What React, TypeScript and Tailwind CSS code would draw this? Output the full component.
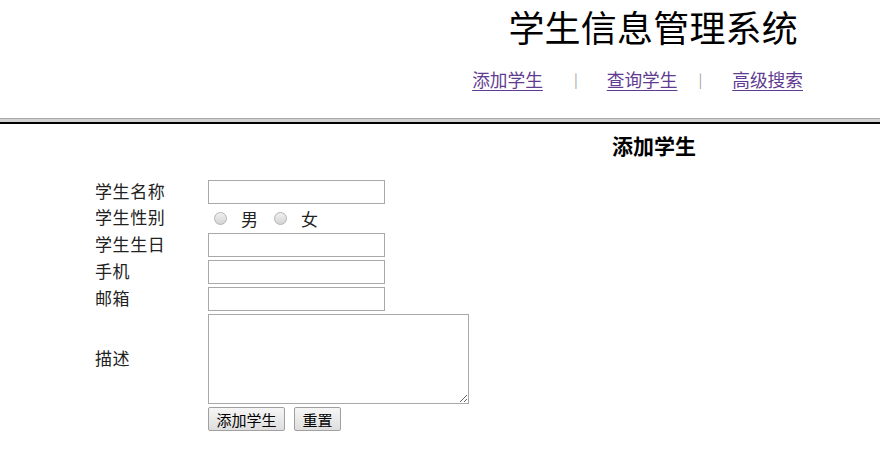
import React from "react";

const font = { fontFamily: '"Noto Sans CJK SC", "Liberation Sans", sans-serif' };

const Field = ({ label, children, h = "h-[27px]" }: { label: string; children: React.ReactNode; h?: string }) => (
    <div className={`flex items-center ${h}`}>
        <div className="w-[113px] pb-[4px] text-[17px] leading-none tracking-[0.6px] text-[#222]">{label}</div>
        {children}
    </div>
);

const TextInput = () => (
    <input type="text" className="h-[24px] w-[177px] border border-[#a9a9a9] bg-white px-1 text-[14px] outline-none" />
);

const Radio = ({ label, first }: { label: string; first?: boolean }) => (
    <label className="flex items-center">
        <span
            className={`${first ? "ml-[6px]" : "ml-[16px]"} inline-block h-[13px] w-[13px] rounded-full border border-[#b4b4b4] bg-gradient-to-b from-[#f0f0f0] to-[#d4d4d4]`}
        ></span>
        <span className="ml-[14px] text-[17px] leading-none text-[#222]">{label}</span>
    </label>
);

const App = () => {
    return (
        <div className="h-[468px] w-[880px] bg-white" style={font}>
            {/* header */}
            <div className="h-[118px]">
                <div className="flex justify-end pr-[82px] pt-[8px]">
                    <h1 className="text-[36px] leading-[36px] tracking-[0.2px] text-black">学生信息管理系统</h1>
                </div>
                <div className="mt-[23px] flex items-center justify-end pr-[77px] text-[17.7px] leading-[24px]">
                    <a href="#" className="text-[#5f3b91] underline underline-offset-[3px]">添加学生</a>
                    <span className="ml-[31px] mr-[29px] text-[14px] text-[#a0a0a0]">|</span>
                    <a href="#" className="text-[#5f3b91] underline underline-offset-[3px]">查询学生</a>
                    <span className="ml-[21px] mr-[30px] text-[14px] text-[#a0a0a0]">|</span>
                    <a href="#" className="text-[#5f3b91] underline underline-offset-[3px]">高级搜索</a>
                </div>
            </div>
            {/* divider */}
            <div className="h-[1px] bg-[#a8a8a8]"></div>
            <div className="h-[3px] bg-[#d2d2d2]"></div>
            <div className="h-[2px] bg-black"></div>

            <div className="pl-[612px] pt-[9px] text-[21px] font-bold leading-[24px] text-black">添加学生</div>

            <div className="mt-[23px] pl-[95px]">
                <Field label="学生名称" h="h-[24px]">
                    <TextInput />
                </Field>
                <Field label="学生性别" h="h-[29px]">
                    <div className="flex items-center">
                        <Radio label="男" first />
                        <Radio label="女" />
                    </div>
                </Field>
                <Field label="学生生日" h="h-[24px]">
                    <TextInput />
                </Field>
                <div className="h-[3px]"></div>
                <Field label="手机" h="h-[24px]">
                    <TextInput />
                </Field>
                <div className="h-[3px]"></div>
                <Field label="邮箱" h="h-[24px]">
                    <TextInput />
                </Field>
                <div className="h-[3px]"></div>
                <Field label="描述" h="h-[90px]">
                    <textarea className="h-[90px] w-[261px] border border-[#a9a9a9] bg-white text-[14px] outline-none"></textarea>
                </Field>
                <div className="mt-[3px] flex pl-[113px]">
                    <button className="h-[24px] w-[77px] rounded-[2px] border border-[#a0a0a0] bg-gradient-to-b from-[#f6f6f6] to-[#dedede] text-[15px] leading-none text-black">
                        添加学生
                    </button>
                    <button className="ml-[9px] h-[24px] w-[47px] rounded-[2px] border border-[#a0a0a0] bg-gradient-to-b from-[#f6f6f6] to-[#dedede] text-[15px] leading-none text-black">
                        重置
                    </button>
                </div>
            </div>
        </div>
    );
};

export default App;
